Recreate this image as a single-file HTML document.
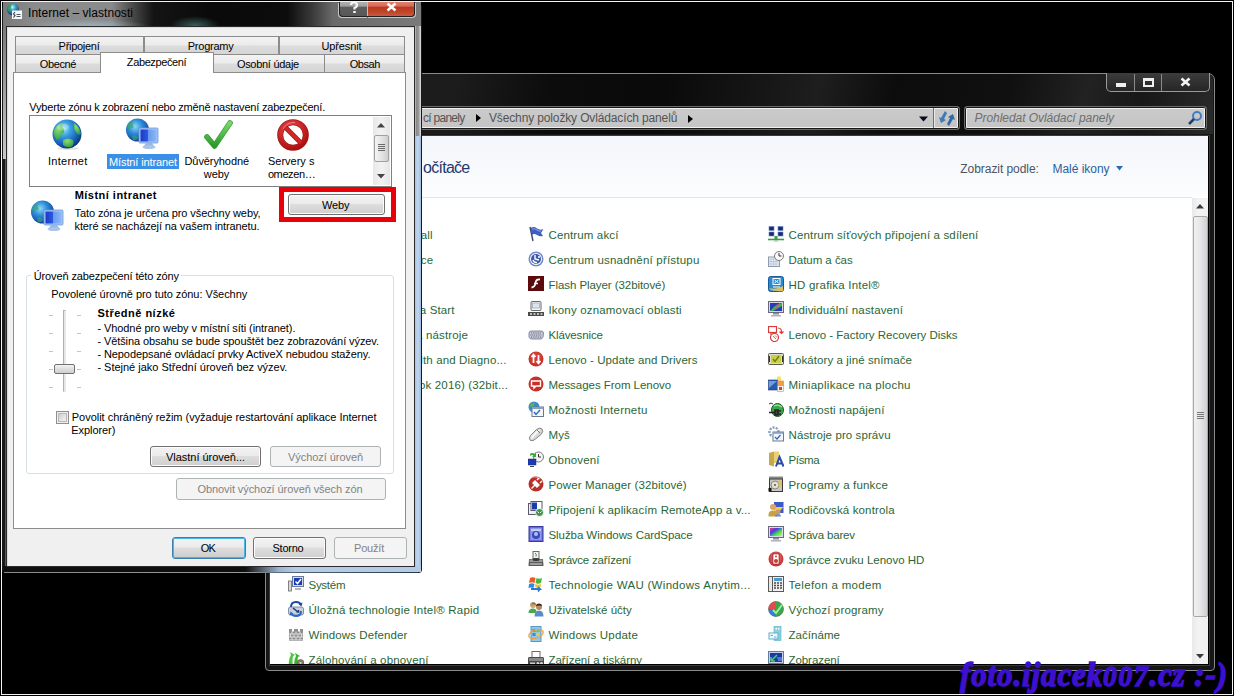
<!DOCTYPE html><html><head><meta charset="utf-8"><style>
html,body{margin:0;padding:0;}
body{width:1234px;height:696px;background:#000;position:relative;overflow:hidden;font-family:"Liberation Sans",sans-serif;}
.r{position:absolute;box-sizing:border-box;}
.t{position:absolute;white-space:nowrap;line-height:1;}
</style></head><body>
<div class="r" style="left:1px;top:1px;width:1232px;height:694px;border:1px solid #f4f4f4;"></div>
<div class="r" style="left:265px;top:73px;width:950px;height:598px;border:1px solid #8a8a8a;border-radius:7px 7px 4px 4px;background:#161616;"></div>
<div class="r" style="left:266px;top:74px;width:947px;height:60px;background:linear-gradient(100deg,#1a1a1a 0%,#1c1c1c 20%,#0c0c0c 30%,#0a0a0a 42%,#161616 52%,#1e1e1e 58%,#0c0c0c 66%,#101010 78%,#222 86%,#181818 92%,#2a2a2a 100%);border-radius:6px 6px 0 0;"></div>
<div class="r" style="left:270px;top:135px;width:938px;height:1px;background:#5a5a5a;"></div>
<div class="r" style="left:270px;top:665px;width:938px;height:1px;background:#707070;"></div>
<div class="r" style="left:269px;top:136px;width:1px;height:529px;background:#707070;"></div>
<div class="r" style="left:1209px;top:136px;width:1px;height:529px;background:#707070;"></div>
<div class="r" style="left:269px;top:135px;width:941px;height:531px;border:1px solid #3a3a3a;background:#000;"></div>
<div class="r" style="left:1106px;top:73px;width:104px;height:19px;border:1px solid #9a9a9a;border-top:none;border-radius:0 0 5px 5px;background:linear-gradient(#3c3c3c,#262626);"></div>
<div class="r" style="left:1134px;top:74px;width:1px;height:17px;background:#8a8a8a;"></div>
<div class="r" style="left:1161px;top:74px;width:1px;height:17px;background:#8a8a8a;"></div>
<div class="r" style="left:1116px;top:83px;width:10px;height:4px;background:#f0f0f0;"></div>
<div class="r" style="left:1143px;top:78px;width:11px;height:9px;border:2px solid #f0f0f0;border-top-width:3px;"></div>
<svg class="r" style="left:1180px;top:77px" width="11" height="10" viewBox="0 0 11 10"><path d="M1.5 1.5 L9.5 8.5 M9.5 1.5 L1.5 8.5" stroke="#f4f4f4" stroke-width="2.6"></path></svg>
<div class="r" style="left:400px;top:106px;width:560px;height:24px;border:1px solid #6a6a6a;border-radius:3px;box-shadow:inset 0 0 0 1px #181818,inset 0 0 0 2px #f0f0f0;background:linear-gradient(#cbcbcb,#c4c4c4);"></div>
<div class="r" style="left:933px;top:108px;width:1px;height:20px;background:#707070;"></div>
<div class="r" style="left:934px;top:108px;width:1px;height:20px;background:#e8e8e8;"></div>
<svg class="r" style="left:919px;top:116px" width="9" height="6" viewBox="0 0 9 6"><path d="M0 0.5 H9 L4.5 5.5 Z" fill="#0a0a20"></path></svg>
<span class="t" style="left: 423px; top: 112.24px; font-size: 12px; color: rgb(84, 84, 84); letter-spacing: -0.726px;">cí panely</span>
<svg class="r" style="left:476px;top:114px" width="5" height="8" viewBox="0 0 5 8"><path d="M0 0 L5 4 L0 8 Z" fill="#000"></path></svg>
<span class="t" style="left: 489px; top: 112.24px; font-size: 12px; color: rgb(84, 84, 84); letter-spacing: -0.139px;">Všechny položky Ovládacích panelů</span>
<svg class="r" style="left:688px;top:114.5px" width="5" height="8" viewBox="0 0 5 8"><path d="M0 0 L5 4 L0 8 Z" fill="#000"></path></svg>
<svg class="r" style="left:937px;top:110px" width="20" height="17" viewBox="0 0 20 17"><path d="M8 1 L4 8 L2 7 L4 13 L9 10 L7 9 L10 3 Z" fill="#3d7ab8"></path><path d="M12 16 L16 9 L18 10 L16 4 L11 7 L13 8 L10 14 Z" fill="#2f6aa6"></path></svg>
<div class="r" style="left:964px;top:106px;width:243px;height:24px;border:1px solid #6a6a6a;border-radius:3px;box-shadow:inset 0 0 0 1px #181818,inset 0 0 0 2px #f0f0f0;background:linear-gradient(#cbcbcb,#c4c4c4);"></div>
<span class="t" style="left: 974.5px; top: 112.24px; font-size: 12px; color: rgb(110, 110, 110); font-style: italic; letter-spacing: -0.051px;">Prohledat Ovládací panely</span>
<svg class="r" style="left:1187px;top:110px" width="16" height="16" viewBox="0 0 16 16"><circle cx="10" cy="6" r="4" fill="none" stroke="#3f7fbf" stroke-width="2"></circle><path d="M7 9 L2 14" stroke="#1f3f6f" stroke-width="2.5"></path></svg>
<div class="r" style="left:270px;top:136px;width:938px;height:528px;background:#fff;"></div>
<div class="r" style="left:270px;top:136px;width:938px;height:61px;background:linear-gradient(180deg,#f3f6fb 0%,#f7f9fc 50%,#fcfdfe 100%);"></div>
<div class="r" style="left:270px;top:197px;width:922px;height:1px;background:#dce6ec;"></div>
<span class="t" style="left: 423px; top: 159.86px; font-size: 16px; color: rgb(30, 58, 110); letter-spacing: -0.728px;">očítače</span>
<span class="t" style="left: 960.3px; top: 163.24px; font-size: 12px; color: rgb(74, 86, 99); letter-spacing: -0.053px;">Zobrazit podle:</span>
<span class="t" style="left: 1052.5px; top: 163.24px; font-size: 12px; color: rgb(44, 95, 158); letter-spacing: -0.036px;">Malé ikony</span>
<svg class="r" style="left:1116px;top:166px" width="7" height="5" viewBox="0 0 7 5"><path d="M0 0 H7 L3.5 4.5 Z" fill="#2c6aaf"></path></svg>
<div class="r" style="left:1192px;top:198px;width:16px;height:466px;background:linear-gradient(90deg,#e9e9e9,#f3f3f3 40%,#f0f0f0);"></div>
<svg class="r" style="left:1196px;top:204px" width="8" height="5" viewBox="0 0 8 5"><path d="M0 4.5 L4 0 L8 4.5 Z" fill="#3a3a3a"></path></svg>
<svg class="r" style="left:1196px;top:654px" width="8" height="5" viewBox="0 0 8 5"><path d="M0 0 H8 L4 4.5 Z" fill="#3a3a3a"></path></svg>
<div class="r" style="left:1193px;top:216px;width:15px;height:401px;border:1px solid #a8a8a8;border-radius:2px;background:linear-gradient(90deg,#f1f1f1,#e6e6e8 50%,#d0d0d4);"></div>
<div class="r" style="left:1197px;top:412px;width:7px;height:1px;background:#777;"></div>
<div class="r" style="left:1197px;top:414px;width:7px;height:1px;background:#777;"></div>
<div class="r" style="left:1197px;top:416px;width:7px;height:1px;background:#777;"></div>
<div class="r" style="left:1197px;top:418px;width:7px;height:1px;background:#777;"></div>
<div class="r" style="left:270px;top:198px;width:922px;height:466px;overflow:hidden;">
<span class="t" style="left: 278.5px; top: 31.77px; font-size: 11.5px; color: rgb(42, 102, 54); letter-spacing: 0.134px;">Centrum akcí</span>
<svg class="r" style="left:258px;top:28px" width="16" height="16" viewBox="0 0 16 16"><path d="M2 1 L5 15" stroke="#3a4a6a" stroke-width="1.4"></path><path d="M2.5 2 Q6 0 9 2.5 Q12 4.5 15.5 3 L13 7 L15 10 Q12 11 9 9 Q6 7 4 9 Z" fill="#3f5fc0"></path><path d="M4 3 Q7 2 9 4 Q11 5.5 13 5" stroke="#8aa4e8" stroke-width="1" fill="none"></path></svg>
<span class="t" style="left: 278.5px; top: 56.77px; font-size: 11.5px; color: rgb(42, 102, 54); letter-spacing: 0.201px;">Centrum usnadnění přístupu</span>
<svg class="r" style="left:258px;top:53px" width="16" height="16" viewBox="0 0 16 16"><circle cx="8" cy="8" r="7.5" fill="#7088c8"></circle><circle cx="8" cy="8" r="6" fill="#fff"></circle><circle cx="8" cy="8" r="5" fill="#3a58a8"></circle><path d="M7 4 V8 L11 9 M5 9 Q6 12 9 11.5" stroke="#fff" stroke-width="1.4" fill="none"></path><circle cx="11" cy="6" r="1" fill="#fff"></circle></svg>
<span class="t" style="left: 278.5px; top: 81.77px; font-size: 11.5px; color: rgb(42, 102, 54); letter-spacing: -0.067px;">Flash Player (32bitové)</span>
<svg class="r" style="left:258px;top:78px" width="16" height="16" viewBox="0 0 16 16"><rect x="0" y="0" width="16" height="15" fill="#5c0a0c"></rect><path d="M12 3.5 Q8 3 7.5 7 Q7 11 3.5 11.5" stroke="#fff" stroke-width="1.8" fill="none"></path><path d="M6 7.5 H10" stroke="#fff" stroke-width="1.5"></path></svg>
<span class="t" style="left: 278.5px; top: 106.77px; font-size: 11.5px; color: rgb(42, 102, 54); letter-spacing: 0.174px;">Ikony oznamovací oblasti</span>
<svg class="r" style="left:258px;top:103px" width="16" height="16" viewBox="0 0 16 16"><rect x="3" y="0.5" width="10" height="9" rx="1" fill="#f4f4f4" stroke="#6a6a6a"></rect><rect x="4.5" y="2" width="7" height="5" fill="#dde6ee" stroke="#8a9aaa" stroke-width=".6"></rect><rect x="0" y="11" width="16" height="4" fill="#4a4a4a"></rect><path d="M2 13 H4 M5.5 13 H7.5 M9 13 H11 M12.5 13 H14.5" stroke="#e0e0e0" stroke-width="1.4"></path></svg>
<span class="t" style="left: 278.5px; top: 131.77px; font-size: 11.5px; color: rgb(42, 102, 54); letter-spacing: -0.133px;">Klávesnice</span>
<svg class="r" style="left:258px;top:128px" width="16" height="16" viewBox="0 0 16 16"><path d="M1 7 Q1 5 3.5 5 H13 Q15.5 5 15.5 7 L15 11 Q14.5 13 12 13 H4 Q1.5 13 1 11 Z" fill="#c8cad8" stroke="#6a6e88" stroke-width=".8"></path><path d="M3 7 H13 M2.5 9 H13.5 M3 11 H13" stroke="#5a5e78" stroke-width=".9" stroke-dasharray="1 .8"></path></svg>
<span class="t" style="left: 278.5px; top: 156.77px; font-size: 11.5px; color: rgb(42, 102, 54); letter-spacing: 0.077px;">Lenovo - Update and Drivers</span>
<svg class="r" style="left:258px;top:153px" width="16" height="16" viewBox="0 0 16 16"><circle cx="8" cy="8" r="7.5" fill="#c8302a"></circle><circle cx="8" cy="7" r="6" fill="#d84a40" opacity=".6"></circle><path d="M5.5 12 V4 M3.5 6 L5.5 3.5 L7.5 6 M10.5 4 V12 M8.5 10 L10.5 12.5 L12.5 10" stroke="#fff" stroke-width="1.7" fill="none"></path></svg>
<span class="t" style="left: 278.5px; top: 181.77px; font-size: 11.5px; color: rgb(42, 102, 54); letter-spacing: -0.039px;">Messages From Lenovo</span>
<svg class="r" style="left:258px;top:178px" width="16" height="16" viewBox="0 0 16 16"><circle cx="8" cy="8" r="7.5" fill="#c8302a"></circle><path d="M3.5 5 H12.5 V10 H8 L6 12 V10 H3.5 Z" fill="none" stroke="#fff" stroke-width="1.4"></path></svg>
<span class="t" style="left: 278.5px; top: 206.77px; font-size: 11.5px; color: rgb(42, 102, 54); letter-spacing: 0.249px;">Možnosti Internetu</span>
<svg class="r" style="left:258px;top:203px" width="16" height="16" viewBox="0 0 16 16"><circle cx="6" cy="6" r="5.5" fill="#3a8ac8"></circle><path d="M2 4 Q4 1 7 2 Q5 4 6 6 Q3 7 2 5Z" fill="#5ab84a"></path><rect x="4" y="6" width="11.5" height="9.5" fill="#f4f6fa" stroke="#6a7a8a"></rect><rect x="4" y="6" width="11.5" height="2" fill="#8aa0c0"></rect><path d="M6 11 L8 13.5 L12 9" stroke="#2a6ac8" stroke-width="1.4" fill="none"></path></svg>
<span class="t" style="left: 278.5px; top: 231.77px; font-size: 11.5px; color: rgb(42, 102, 54); letter-spacing: 0.135px;">Myš</span>
<svg class="r" style="left:258px;top:228px" width="16" height="16" viewBox="0 0 16 16"><path d="M2.5 14.5 Q0 12.5 2.5 9.5 L8.5 3.5 Q11.5 1 14 3 Q16 5.5 13 8.5 L7.5 13 Q5 15.5 2.5 14.5 Z" fill="#d8d8d8" stroke="#6a6a6a" stroke-width=".8"></path><path d="M3 13 Q2 11 4 9.5 L9 4.5 Q11 3 12 4 L5 12 Z" fill="#f6f6f6"></path><path d="M9 4 L12 7" stroke="#5a5a5a" stroke-width=".8"></path></svg>
<span class="t" style="left: 278.5px; top: 256.77px; font-size: 11.5px; color: rgb(42, 102, 54); letter-spacing: 0.166px;">Obnovení</span>
<svg class="r" style="left:258px;top:253px" width="16" height="16" viewBox="0 0 16 16"><circle cx="10.5" cy="6" r="5" fill="#f4f4f4" stroke="#7a7a7a"></circle><path d="M10.5 3 V6 H13" stroke="#333" stroke-width="1" fill="none"></path><path d="M2 3 Q4 1 7 3 L8 1 L8 6 L4 6 L5.5 4.5 Q4 3.5 2 5Z" fill="#3aa83a"></path><rect x="0" y="8" width="8" height="6" fill="#1a3ab8" stroke="#2a2a6a" stroke-width=".5"></rect><path d="M2 15.5 H6" stroke="#444" stroke-width="1"></path></svg>
<span class="t" style="left: 278.5px; top: 281.77px; font-size: 11.5px; color: rgb(42, 102, 54); letter-spacing: 0.112px;">Power Manager (32bitové)</span>
<svg class="r" style="left:258px;top:278px" width="16" height="16" viewBox="0 0 16 16"><circle cx="8" cy="8" r="7.5" fill="#b8302a"></circle><path d="M4 1.5 Q8 0 12 3" stroke="#e88880" stroke-width="1.2" fill="none"></path><path d="M3.5 12.5 L6.5 9.5 M7 5 L11 9 L9 11 L5 7 Z M9 4 L11 2 M12 7 L14 5" stroke="#fff" stroke-width="1.4" fill="#fff"></path></svg>
<span class="t" style="left: 278.5px; top: 306.77px; font-size: 11.5px; color: rgb(42, 102, 54); letter-spacing: 0.129px;">Připojení k aplikacím RemoteApp a v...</span>
<svg class="r" style="left:258px;top:303px" width="16" height="16" viewBox="0 0 16 16"><rect x="0.5" y="2.5" width="8" height="11" fill="#f0f0f0" stroke="#5a5a6a"></rect><rect x="3" y="0.5" width="11" height="9" fill="#fff" stroke="#5a5a6a"></rect><rect x="4" y="1.5" width="5" height="7" fill="#1a3ab0"></rect><circle cx="11.5" cy="11.5" r="4" fill="#3a9a4a" stroke="#fff" stroke-width=".8"></circle><path d="M9.5 10.5 L11 12 M13.5 10.5 L12 12" stroke="#fff" stroke-width="1"></path></svg>
<span class="t" style="left: 278.5px; top: 331.77px; font-size: 11.5px; color: rgb(42, 102, 54); letter-spacing: -0.069px;">Služba Windows CardSpace</span>
<svg class="r" style="left:258px;top:328px" width="16" height="16" viewBox="0 0 16 16"><rect x="1" y="0.5" width="14" height="15" fill="#6a6ad8" stroke="#3a3a9a"></rect><rect x="2.5" y="2" width="11" height="12" fill="#8a9af0"></rect><circle cx="8" cy="9" r="4" fill="#3a4ab8"></circle><path d="M3 4 H13" stroke="#fff" stroke-width="1"></path><circle cx="8" cy="8" r="2" fill="#b0c0ff"></circle></svg>
<span class="t" style="left: 278.5px; top: 356.77px; font-size: 11.5px; color: rgb(42, 102, 54); letter-spacing: -0.237px;">Správce zařízení</span>
<svg class="r" style="left:258px;top:353px" width="16" height="16" viewBox="0 0 16 16"><rect x="5" y="0.5" width="6" height="7" fill="#f4f4f4" stroke="#6a6a6a"></rect><path d="M7 2 Q9 3 8 5.5" stroke="#3a8a3a" stroke-width="1" fill="none"></path><path d="M1 8 H15 L15.5 15 H0.5 Z" fill="#5a5a5a"></path><rect x="1.5" y="8.5" width="13" height="2.5" fill="#9a9a9a"></rect><path d="M2 13 H14" stroke="#e0e0e0" stroke-width="1"></path><ellipse cx="8" cy="8.5" rx="3.5" ry="1.5" fill="#3a3a3a"></ellipse></svg>
<span class="t" style="left: 278.5px; top: 381.77px; font-size: 11.5px; color: rgb(42, 102, 54); letter-spacing: 0.301px;">Technologie WAU (Windows Anytim...</span>
<svg class="r" style="left:258px;top:378px" width="16" height="16" viewBox="0 0 16 16"><path d="M2 2 Q4.5 0.5 7.5 2 L6.5 7 Q4 5.5 1 7 Z" fill="#f05a20"></path><path d="M8.5 2 Q11.5 3.5 14 2 L13 7 Q10 8.5 7.5 7 Z" fill="#4ab83a"></path><path d="M1 8 Q4 6.5 6.5 8 L5.5 12 Q3 11 0.5 12 Z" fill="#2a8ae8"></path><path d="M7.5 8 Q10 9.5 13 8 L12.5 11 Q10 12 7 11Z" fill="#f8c020"></path><path d="M3 13 H12 L10 11 M12 13 L10 15.5" stroke="#2a7ad8" stroke-width="1.8" fill="none"></path></svg>
<span class="t" style="left: 278.5px; top: 406.77px; font-size: 11.5px; color: rgb(42, 102, 54); letter-spacing: 0.013px;">Uživatelské účty</span>
<svg class="r" style="left:258px;top:403px" width="16" height="16" viewBox="0 0 16 16"><circle cx="5" cy="4" r="3" fill="#c8a878"></circle><path d="M5 1.5 Q8 1 8 4 Q6 2.5 3 4Z" fill="#8a6a3a"></path><path d="M0.5 12 Q0.5 7.5 5 7.5 Q8 7.5 8.5 10 V12 Z" fill="#4aa84a"></path><circle cx="11" cy="6" r="3" fill="#b88858"></circle><path d="M8 5 Q8 2.5 11 2.5 Q14 2.5 14 5 Q11 4 8 5Z" fill="#3a2a1a"></path><path d="M6.5 15.5 Q6.5 9.5 11 9.5 Q15.5 9.5 15.5 15.5 Z" fill="#5a8ac8"></path></svg>
<span class="t" style="left: 278.5px; top: 431.77px; font-size: 11.5px; color: rgb(42, 102, 54); letter-spacing: 0.183px;">Windows Update</span>
<svg class="r" style="left:258px;top:428px" width="16" height="16" viewBox="0 0 16 16"><rect x="3" y="0.5" width="10" height="15" fill="#8ac8f0" stroke="#5a9ac8"></rect><rect x="4.5" y="3" width="3" height="3" fill="#f06a30"></rect><rect x="8.5" y="3" width="3" height="3" fill="#6ac84a"></rect><rect x="4.5" y="7" width="3" height="3" fill="#3a8ad8"></rect><rect x="8.5" y="7" width="3" height="3" fill="#f8c830"></rect><ellipse cx="8" cy="8" rx="7.5" ry="4" transform="rotate(-20 8 8)" fill="none" stroke="#f0a040" stroke-width="1.3"></ellipse></svg>
<span class="t" style="left: 278.5px; top: 456.77px; font-size: 11.5px; color: rgb(42, 102, 54); letter-spacing: -0.058px;">Zařízení a tiskárny</span>
<svg class="r" style="left:258px;top:453px" width="16" height="16" viewBox="0 0 16 16"><rect x="4" y="0.5" width="8" height="6" fill="#fff" stroke="#6a6a6a"></rect><path d="M1 6 H15 Q16 6 16 8 V14 H0 V8 Q0 6 1 6Z" fill="#4a4a4a"></path><rect x="1" y="7" width="14" height="3" fill="#8a8a8a"></rect><circle cx="10" cy="12.5" r="1.5" fill="#ddd"></circle><circle cx="13.5" cy="12.5" r="1.5" fill="#ddd"></circle><rect x="2" y="11.5" width="5" height="2" fill="#ccc"></rect></svg>
<span class="t" style="left: 518.5px; top: 31.77px; font-size: 11.5px; color: rgb(42, 102, 54); letter-spacing: 0.148px;">Centrum síťových připojení a sdílení</span>
<svg class="r" style="left:498px;top:28px" width="16" height="16" viewBox="0 0 16 16"><rect x="1" y="0.5" width="5" height="4" fill="#1a2a6a" stroke="#6a8ac8" stroke-width=".6"></rect><rect x="10" y="0.5" width="5" height="4" fill="#1a2a6a" stroke="#6a8ac8" stroke-width=".6"></rect><rect x="1" y="6" width="5" height="4" fill="#1a2a6a" stroke="#6a8ac8" stroke-width=".6"></rect><rect x="10" y="6" width="5" height="4" fill="#1a2a6a" stroke="#6a8ac8" stroke-width=".6"></rect><path d="M0 13.5 H16" stroke="#3a9a4a" stroke-width="1.6"></path><path d="M8 10 V13" stroke="#3a9a4a" stroke-width="3"></path><path d="M6 15 H10" stroke="#8ac88a" stroke-width="1"></path></svg>
<span class="t" style="left: 518.5px; top: 56.77px; font-size: 11.5px; color: rgb(42, 102, 54); letter-spacing: -0.033px;">Datum a čas</span>
<svg class="r" style="left:498px;top:53px" width="16" height="16" viewBox="0 0 16 16"><rect x="0.5" y="6" width="11" height="9.5" fill="#e8eef6" stroke="#8a9aaa"></rect><path d="M0.5 8 H11.5 M3 8 V15 M5.5 8 V15 M8 8 V15 M0.5 10.5 H11.5 M0.5 13 H11.5" stroke="#a8b8c8" stroke-width=".6"></path><circle cx="11" cy="5" r="4.5" fill="#fafafa" stroke="#7a7a7a"></circle><path d="M11 2 V5 H13.5" stroke="#333" stroke-width="1" fill="none"></path></svg>
<span class="t" style="left: 518.5px; top: 81.77px; font-size: 11.5px; color: rgb(42, 102, 54); letter-spacing: 0.21px;">HD grafika Intel®</span>
<svg class="r" style="left:498px;top:78px" width="16" height="16" viewBox="0 0 16 16"><rect x="0.5" y="0.5" width="15" height="15" rx="2" fill="#2a8ad0" stroke="#1a5a9a"></rect><path d="M1 12 Q4 16 15 15 L15 10 Q8 14 1 12Z" fill="#d8c060"></path><rect x="5" y="2.5" width="7" height="6" fill="none" stroke="#fff" stroke-width="1"></rect><path d="M6.5 4 L10.5 7 M10.5 4 L6.5 7 M5 11 H12" stroke="#fff" stroke-width="1"></path></svg>
<span class="t" style="left: 518.5px; top: 106.77px; font-size: 11.5px; color: rgb(42, 102, 54); letter-spacing: 0.148px;">Individuální nastavení</span>
<svg class="r" style="left:498px;top:103px" width="16" height="16" viewBox="0 0 16 16"><rect x="0.5" y="0.5" width="15" height="11" fill="#d8d8e0" stroke="#6a6a7a"></rect><rect x="2" y="2" width="12" height="8" fill="#2a3ab8"></rect><path d="M2 10 L7 5 Q10 3 14 2 V5 L5 10Z" fill="#3ab84a"></path><path d="M12 2.5 L7 8" stroke="#e84a8a" stroke-width="1.2"></path><rect x="5" y="12" width="6" height="1.5" fill="#8a8a9a"></rect><rect x="3" y="14" width="10" height="1.5" fill="#b0b0b8"></rect></svg>
<span class="t" style="left: 518.5px; top: 131.77px; font-size: 11.5px; color: rgb(42, 102, 54); letter-spacing: -0.012px;">Lenovo - Factory Recovery Disks</span>
<svg class="r" style="left:498px;top:128px" width="16" height="16" viewBox="0 0 16 16"><rect x="0.5" y="0.5" width="8" height="6" fill="#fff" stroke="#d83a3a" stroke-width="1.2"></rect><path d="M2 8 H7" stroke="#d83a3a" stroke-width="1.2"></path><circle cx="6.5" cy="11.5" r="4" fill="#fff" stroke="#d83a3a" stroke-width="1.2"></circle><path d="M5 10 L8 13 M7 9.5 L9 11.5" stroke="#d83a3a" stroke-width=".8"></path><path d="M10 2 Q14 2 13.5 7 M11.5 5.5 L13.5 7.5 L15.5 5.5" stroke="#d83a3a" stroke-width="1.2" fill="none"></path></svg>
<span class="t" style="left: 518.5px; top: 156.77px; font-size: 11.5px; color: rgb(42, 102, 54); letter-spacing: 0.089px;">Lokátory a jiné snímače</span>
<svg class="r" style="left:498px;top:153px" width="16" height="16" viewBox="0 0 16 16"><rect x="0.5" y="2.5" width="15" height="11" rx="1" fill="#dcdcc8" stroke="#5a5a50"></rect><rect x="3" y="4" width="10" height="8" fill="#c8d040"></rect><path d="M5 8 L7 10.5 L11 5" stroke="#6a7a2a" stroke-width="1.3" fill="none"></path><path d="M1.5 5 V11 M14.5 5 V11" stroke="#333" stroke-width="1"></path></svg>
<span class="t" style="left: 518.5px; top: 181.77px; font-size: 11.5px; color: rgb(42, 102, 54); letter-spacing: 0.27px;">Miniaplikace na plochu</span>
<svg class="r" style="left:498px;top:178px" width="16" height="16" viewBox="0 0 16 16"><rect x="9" y="0.5" width="4" height="4" fill="#f8e060"></rect><rect x="0.5" y="4" width="9" height="10" fill="#2a5ab0" stroke="#1a3a7a" stroke-width=".6"></rect><path d="M1 5 L9 5 L1 12Z" fill="#6aa0e0"></path><rect x="9.5" y="5" width="6" height="4.5" fill="#f0a040" stroke="#c87a20" stroke-width=".5"></rect><rect x="9.5" y="9.5" width="6" height="6" fill="#f4f4f4" stroke="#888" stroke-width=".5"></rect><rect x="11" y="11" width="3" height="3" fill="#c84a2a"></rect></svg>
<span class="t" style="left: 518.5px; top: 206.77px; font-size: 11.5px; color: rgb(42, 102, 54); letter-spacing: 0.156px;">Možnosti napájení</span>
<svg class="r" style="left:498px;top:203px" width="16" height="16" viewBox="0 0 16 16"><path d="M5 3 Q3 1 1 3" stroke="#333" stroke-width="1" fill="none"></path><ellipse cx="9.5" cy="9" rx="6" ry="6.5" fill="#3aa84a" stroke="#1a5a2a"></ellipse><path d="M6 5 Q10 3 14 6" stroke="#a8e0a8" stroke-width="1.2" fill="none"></path><path d="M1 11.5 H7 M7 9 H10 V14 H7 Z M10 10 H13 M10 13 H13" stroke="#222" stroke-width="1.6" fill="#444"></path></svg>
<span class="t" style="left: 518.5px; top: 231.77px; font-size: 11.5px; color: rgb(42, 102, 54); letter-spacing: 0.097px;">Nástroje pro správu</span>
<svg class="r" style="left:498px;top:228px" width="16" height="16" viewBox="0 0 16 16"><circle cx="6" cy="6" r="4.5" fill="none" stroke="#8aa0c0" stroke-width="2.5" stroke-dasharray="2 1.2"></circle><rect x="5" y="6" width="10.5" height="9" fill="#f4f6fa" stroke="#6a7a8a"></rect><rect x="5" y="6" width="10.5" height="1.8" fill="#8aa0c0"></rect><path d="M7 11 L9 13 L12.5 9" stroke="#2a6ac8" stroke-width="1.3" fill="none"></path></svg>
<span class="t" style="left: 518.5px; top: 256.77px; font-size: 11.5px; color: rgb(42, 102, 54); letter-spacing: -0.359px;">Písma</span>
<svg class="r" style="left:498px;top:253px" width="16" height="16" viewBox="0 0 16 16"><path d="M1 2 L6 0.5 V15.5 L1 14 Z" fill="#c8a848"></path><path d="M6 0.5 H11 V12 H6Z" fill="#e8d078"></path><path d="M8 15.5 L11.5 6 L15.5 15.5 M9.5 12.5 H14" stroke="#2a4aa8" stroke-width="2" fill="none"></path></svg>
<span class="t" style="left: 518.5px; top: 281.77px; font-size: 11.5px; color: rgb(42, 102, 54); letter-spacing: 0.176px;">Programy a funkce</span>
<svg class="r" style="left:498px;top:278px" width="16" height="16" viewBox="0 0 16 16"><rect x="1" y="0.5" width="14" height="3" fill="#8a8a8a"></rect><rect x="1.5" y="3" width="13" height="12.5" fill="#c8c8c0" stroke="#3a3a3a"></rect><rect x="0.5" y="12" width="3" height="3.5" fill="#111"></rect><circle cx="7" cy="9" r="4" fill="#e0e0d8" stroke="#8a8a7a"></circle><circle cx="7" cy="9" r="1" fill="#5a5a5a"></circle><rect x="10.5" y="4.5" width="3.5" height="6" fill="#e0c060"></rect></svg>
<span class="t" style="left: 518.5px; top: 306.77px; font-size: 11.5px; color: rgb(42, 102, 54); letter-spacing: 0.139px;">Rodičovská kontrola</span>
<svg class="r" style="left:498px;top:303px" width="16" height="16" viewBox="0 0 16 16"><rect x="6" y="1" width="9.5" height="11" fill="#3a5ac8"></rect><path d="M6 6 H15.5 L10 12 H6Z" fill="#f8c840"></path><circle cx="5" cy="6" r="3" fill="#d8a868"></circle><path d="M0.5 14 Q0.5 9.5 5 9.5 Q8 9.5 9 12 L9 15.5 H0.5Z" fill="#c8a040"></path><circle cx="10" cy="11" r="2.5" fill="#c89868"></circle><path d="M7 15.5 Q7 13 10 13 Q13 13 13 15.5Z" fill="#6a8ac8"></path></svg>
<span class="t" style="left: 518.5px; top: 331.77px; font-size: 11.5px; color: rgb(42, 102, 54); letter-spacing: -0.167px;">Správa barev</span>
<svg class="r" style="left:498px;top:328px" width="16" height="16" viewBox="0 0 16 16"><rect x="0.5" y="0.5" width="15" height="11" fill="#d8dce8" stroke="#6a6a7a"></rect><defs><linearGradient id="cg" x1="0" y1="0" x2="1" y2="1"><stop offset="0" stop-color="#e83a8a"></stop><stop offset=".35" stop-color="#4a3ae8"></stop><stop offset=".65" stop-color="#3ae84a"></stop><stop offset="1" stop-color="#f8e83a"></stop></linearGradient></defs><rect x="2" y="2" width="12" height="8" fill="url(#cg)"></rect><rect x="5" y="12" width="6" height="1.5" fill="#8a8a9a"></rect><rect x="3" y="14" width="10" height="1.5" fill="#b0b0b8"></rect></svg>
<span class="t" style="left: 518.5px; top: 356.77px; font-size: 11.5px; color: rgb(42, 102, 54); letter-spacing: -0.015px;">Správce zvuku Lenovo HD</span>
<svg class="r" style="left:498px;top:353px" width="16" height="16" viewBox="0 0 16 16"><circle cx="8" cy="8" r="7.5" fill="#c83a3a"></circle><circle cx="8" cy="7" r="6" fill="#e86a6a" opacity=".5"></circle><rect x="5" y="3" width="6" height="10" fill="#fff" stroke="#8a1a1a" stroke-width=".6"></rect><circle cx="8" cy="10" r="2" fill="#c83a3a"></circle><circle cx="8" cy="5.5" r="1" fill="#c83a3a"></circle></svg>
<span class="t" style="left: 518.5px; top: 381.77px; font-size: 11.5px; color: rgb(42, 102, 54); letter-spacing: 0.332px;">Telefon a modem</span>
<svg class="r" style="left:498px;top:378px" width="16" height="16" viewBox="0 0 16 16"><rect x="0.5" y="0.5" width="4" height="15" fill="#e8e8e8" stroke="#5a5a5a"></rect><rect x="4.5" y="0.5" width="11" height="15" fill="#f0f0f0" stroke="#5a5a5a"></rect><rect x="6" y="2" width="8" height="3" fill="#4a9ac8"></rect><path d="M6 7 H8 M9 7 H11 M12 7 H14 M6 9.5 H8 M9 9.5 H11 M12 9.5 H14 M6 12 H8 M9 12 H11 M12 12 H14" stroke="#4a4a4a" stroke-width="1.4"></path></svg>
<span class="t" style="left: 518.5px; top: 406.77px; font-size: 11.5px; color: rgb(42, 102, 54); letter-spacing: 0.157px;">Výchozí programy</span>
<svg class="r" style="left:498px;top:403px" width="16" height="16" viewBox="0 0 16 16"><circle cx="8" cy="8" r="7.5" fill="#3aa84a" stroke="#5a5a5a" stroke-width=".6"></circle><path d="M8 8 L8 0.5 A7.5 7.5 0 0 0 0.5 8Z" fill="#e84a4a"></path><path d="M8 8 L0.5 8 A7.5 7.5 0 0 0 8 15.5Z" fill="#3a7ad8"></path><path d="M5 9 L8 12 L14 4" stroke="#9af09a" stroke-width="2" fill="none"></path></svg>
<span class="t" style="left: 518.5px; top: 431.77px; font-size: 11.5px; color: rgb(42, 102, 54); letter-spacing: 0.045px;">Začínáme</span>
<svg class="r" style="left:498px;top:428px" width="16" height="16" viewBox="0 0 16 16"><rect x="6" y="0.5" width="7" height="14" fill="#8ad0e0" stroke="#5ab0c8" stroke-width=".6"></rect><rect x="7.5" y="2" width="1.5" height="1.5" fill="#fff"></rect><rect x="10" y="2" width="1.5" height="1.5" fill="#fff"></rect><rect x="1" y="7" width="9" height="6" fill="#f0fafc" stroke="#5ab0c8"></rect><path d="M2.5 9.5 H5 M6 11 H8.5" stroke="#5ab0c8" stroke-width="1.2"></path></svg>
<span class="t" style="left: 518.5px; top: 456.77px; font-size: 11.5px; color: rgb(42, 102, 54); letter-spacing: -0.065px;">Zobrazení</span>
<svg class="r" style="left:498px;top:453px" width="16" height="16" viewBox="0 0 16 16"><rect x="0.5" y="0.5" width="15" height="12" fill="#c8d0e8" stroke="#6a7a9a"></rect><rect x="2" y="2" width="12" height="9" fill="#1a3aa8"></rect><path d="M3 10 L9 4 M3 10 V6 M3 10 H7" stroke="#4ac87a" stroke-width="1.6" fill="none"></path><path d="M9 7 H14 M10 9 H14" stroke="#8ab0f0" stroke-width="1"></path></svg>
<span class="t" style="left: 38.5px; top: 381.77px; font-size: 11.5px; color: rgb(42, 102, 54); letter-spacing: -0.274px;">Systém</span>
<svg class="r" style="left:18px;top:378px" width="16" height="16" viewBox="0 0 16 16"><rect x="0.5" y="5" width="3" height="10" fill="#d8d8d8" stroke="#6a6a6a" stroke-width=".8"></rect><rect x="4.5" y="0.5" width="11" height="10" fill="#d8dce8" stroke="#6a7a9a"></rect><rect x="6" y="2" width="8" height="7" fill="#1a3ab8"></rect><path d="M7.5 5.5 L9.5 7.5 L13 3" stroke="#fff" stroke-width="1.5" fill="none"></path><path d="M7 13 H13" stroke="#9a9aa8" stroke-width="1.5"></path></svg>
<span class="t" style="left: 38.5px; top: 406.77px; font-size: 11.5px; color: rgb(42, 102, 54); letter-spacing: 0.207px;">Úložná technologie Intel® Rapid</span>
<svg class="r" style="left:18px;top:403px" width="16" height="16" viewBox="0 0 16 16"><rect x="0.5" y="6" width="15" height="8" rx="2" fill="#c8d0dc" stroke="#6a7a90" stroke-width=".8"></rect><path d="M3 6 Q3 1 8 1 Q12 1 13 4" stroke="#1a4a9a" stroke-width="2" fill="none"></path><path d="M10.5 3 L13.5 5.5 L14.5 1.5Z" fill="#1a4a9a"></path><path d="M13 10 Q13 15 8 15 Q4 15 3 12" stroke="#2a6ac0" stroke-width="2" fill="none"></path><path d="M5.5 13 L2.5 10.5 L1.5 14.5Z" fill="#2a6ac0"></path><path d="M5 7 L10 11 M8.5 11 H10.5 V9" stroke="#1a3a7a" stroke-width="1.5" fill="none"></path></svg>
<span class="t" style="left: 38.5px; top: 431.77px; font-size: 11.5px; color: rgb(42, 102, 54); letter-spacing: 0.115px;">Windows Defender</span>
<svg class="r" style="left:18px;top:428px" width="16" height="16" viewBox="0 0 16 16"><path d="M1 3 H4 V5.5 H6 V3 H10 V5.5 H12 V3 H15 V15 H1Z" fill="#8e8e8e"></path><path d="M1 8 H15 M1 11 H15 M1 14 H15 M4 5.5 V8 M8 5.5 V8 M12 5.5 V8 M2.5 8 V11 M6 8 V11 M10 8 V11 M13.5 8 V11 M4 11 V14 M8 11 V14 M12 11 V14" stroke="#e8e8e8" stroke-width=".9"></path></svg>
<span class="t" style="left: 38.5px; top: 456.77px; font-size: 11.5px; color: rgb(42, 102, 54); letter-spacing: 0.147px;">Zálohování a obnovení</span>
<svg class="r" style="left:18px;top:453px" width="16" height="16" viewBox="0 0 16 16"><path d="M1 15 Q0 8 3 4 L2 1 L7 4 L5 5 Q4 9 5 15Z" fill="#4ac83a"></path><path d="M6 15 Q6 8 8 5 L7 2 L12 5 L10 6 Q9 10 10 15Z" fill="#3ab82a"></path><circle cx="12.5" cy="12" r="3.5" fill="#8a7a6a" stroke="#5a5a5a" stroke-width=".6"></circle><circle cx="12.5" cy="12" r="1" fill="#ddd"></circle></svg>
<span class="t" style="right:759.3px;top:31.77px;font-size:11.5px;color:#2a6636;letter-spacing:0.15px;">Brána Windows Firewall</span>
<span class="t" style="right:758.8px;top:56.77px;font-size:11.5px;color:#2a6636;letter-spacing:0.15px;">Centrum synchronizace</span>
<span class="t" style="right:737.3px;top:106.77px;font-size:11.5px;color:#2a6636;letter-spacing:0.15px;">Hlavní panel a nabídka Start</span>
<span class="t" style="right:723.9px;top:131.77px;font-size:11.5px;color:#2a6636;letter-spacing:0.15px;">Výkonnostní informace a nástroje</span>
<span class="t" style="right:685.5px;top:156.77px;font-size:11.5px;color:#2a6636;letter-spacing:0.15px;">Lenovo - System Health and Diagno...</span>
<span class="t" style="right:684.0px;top:181.77px;font-size:11.5px;color:#2a6636;letter-spacing:0.15px;">Mail (Microsoft Outlook 2016) (32bit...</span>
</div>
<div class="r" style="left:2px;top:2px;width:420px;height:571px;border:1px solid #1a1a1a;border-radius:6px 6px 3px 3px;background:linear-gradient(90deg,#0e0e0e 0%,#121212 60%,#b5cbe4 62%,#b8cfe8 100%);"></div>
<div class="r" style="left:3px;top:2px;width:418px;height:24px;background:linear-gradient(90deg,#7a7a7a 0%,#8c8c8c 8%,#8a8a8a 26%,#4a4a4a 31%,#141414 36%,#0a0a0a 50%,#0c0c0c 68%,#3a3a3a 74%,#6a6a6a 79%,#7a7a7a 100%);"></div>
<div class="r" style="left:30px;top:19px;width:120px;height:7px;background:radial-gradient(ellipse at 50% 100%,rgba(170,210,230,.55),rgba(120,150,170,0) 70%);"></div>
<div class="r" style="left:170px;top:16px;width:50px;height:10px;background:radial-gradient(ellipse at 50% 100%,rgba(90,150,150,.6),rgba(60,100,100,0) 70%);"></div>
<div class="r" style="left:415px;top:26px;width:6px;height:110px;background:linear-gradient(90deg,#c8c8c8,#8a8a8a 25%,#9a9a9a 60%,#e0e0e0);"></div>
<div class="r" style="left:415px;top:136px;width:6px;height:436px;background:linear-gradient(90deg,#a9c3e0,#c0d6ee 50%,#9fbadb);"></div>
<div class="r" style="left:3px;top:26px;width:3px;height:133px;background:linear-gradient(#7a7a7a,#c8c8c8);"></div>
<div class="r" style="left:3px;top:159px;width:3px;height:408px;background:#15191c;"></div>
<div class="r" style="left:5px;top:159px;width:1px;height:407px;background:#5a5a5a;"></div>
<div class="r" style="left:3px;top:566px;width:418px;height:6px;background:linear-gradient(90deg,#0e0e0e 0%,#0e0e0e 58%,#9ab4d0 66%,#b4cbe6 70%,#b4cbe6 100%);"></div>
<div class="r" style="left:4px;top:572px;width:414px;height:1px;background:linear-gradient(90deg,#8a8a8a,#9a9a9a 60%,#5a6a7a 66%,#2a3a4a);"></div>
<div class="r" style="left:6px;top:566px;width:409px;height:1px;background:#6a6a6a;"></div>
<svg class="r" style="left:6px;top:2px" width="18" height="18" viewBox="0 0 18 18"><defs><radialGradient id="tg" cx="45%" cy="30%" r="70%"><stop offset="0" stop-color="#b0fff0"></stop><stop offset=".4" stop-color="#3a9ac8"></stop><stop offset="1" stop-color="#0e3a6a"></stop></radialGradient></defs><circle cx="7" cy="7.5" r="6" fill="url(#tg)"></circle><path d="M2 5 Q3 2 6 2 Q4 5 5 8 Q3 9 2 8Z" fill="#3aa04a" opacity=".8"></path><rect x="6" y="8.5" width="10" height="8.5" fill="#f8f8f8"></rect><path d="M9 10 L7.5 12 L9 13.5 L7.5 15.5" stroke="#3a4a5a" stroke-width="1.2" fill="none"></path><path d="M10.5 12.5 H14.5 M10.5 14.5 H14.5" stroke="#4a5a6a" stroke-width="1"></path></svg>
<span class="t" style="left: 28px; top: 7.04px; font-size: 12px; color: rgb(0, 0, 0); letter-spacing: 0.045px;">Internet – vlastnosti</span>
<div class="r" style="left:339px;top:2px;width:29px;height:15px;border:1px solid #202020;border-top:none;border-right:none;border-radius:0 0 0 4px;background:linear-gradient(#b0b0b0 0%,#a0a0a0 30%,#5e5e5e 36%,#585858 100%);box-shadow:-1px 1px 0 #c8c8c8;"></div>
<div class="r" style="left:367px;top:2px;width:48px;height:15px;border:1px solid #202020;border-top:none;border-radius:0 0 4px 0;background:linear-gradient(#e08070 0%,#d86a58 30%,#b83a22 36%,#c04428 70%,#c85a40 100%);box-shadow:1px 1px 0 #c8c8c8;"></div>
<div class="r" style="left:367px;top:2px;width:1px;height:14px;background:#e8b0a0;"></div>
<svg class="r" style="left:349px;top:2px" width="10" height="11" viewBox="0 0 10 11"><path d="M2 3 Q2 0.5 5 0.5 Q8 0.5 8 3 Q8 5 5.5 6 V7.5" fill="none" stroke="#f4f4f4" stroke-width="2.2"></path><rect x="4.2" y="9" width="2.6" height="2.2" fill="#f4f4f4"></rect></svg>
<svg class="r" style="left:386px;top:2px" width="11" height="10" viewBox="0 0 11 10"><path d="M1.5 1.5 L9.5 8.5 M9.5 1.5 L1.5 8.5" stroke="#f8f8f8" stroke-width="2.6"></path></svg>
<div class="r" style="left:6px;top:26px;width:409px;height:541px;border:1px solid #2a2a2a;background:#f0f0f0;"></div>
<div class="r" style="left:7px;top:27px;width:407px;height:539px;border:1px solid #dcdcdc;border-bottom:none;border-right:none;background:#f0f0f0;"></div>
<div class="r" style="left:15px;top:36px;width:129px;height:19px;border:1px solid #8c8c8c;border-bottom:none;background:linear-gradient(#f3f3f3 0%,#ebebeb 45%,#dcdcdc 50%,#d4d4d4 100%);"></div>
<div class="r" style="left:144px;top:36px;width:135px;height:19px;border:1px solid #8c8c8c;border-bottom:none;background:linear-gradient(#f3f3f3 0%,#ebebeb 45%,#dcdcdc 50%,#d4d4d4 100%);"></div>
<div class="r" style="left:279px;top:36px;width:126px;height:19px;border:1px solid #8c8c8c;border-bottom:none;background:linear-gradient(#f3f3f3 0%,#ebebeb 45%,#dcdcdc 50%,#d4d4d4 100%);"></div>
<div class="r" style="left:15px;top:54px;width:86px;height:19px;border:1px solid #8c8c8c;border-bottom:none;background:linear-gradient(#f3f3f3 0%,#ebebeb 45%,#dcdcdc 50%,#d4d4d4 100%);"></div>
<div class="r" style="left:213px;top:54px;width:112px;height:19px;border:1px solid #8c8c8c;border-bottom:none;background:linear-gradient(#f3f3f3 0%,#ebebeb 45%,#dcdcdc 50%,#d4d4d4 100%);"></div>
<div class="r" style="left:324px;top:54px;width:81px;height:19px;border:1px solid #8c8c8c;border-bottom:none;background:linear-gradient(#f3f3f3 0%,#ebebeb 45%,#dcdcdc 50%,#d4d4d4 100%);"></div>
<div class="r" style="left:13px;top:72px;width:393px;height:457px;border:1px solid #8c8c8c;background:#fff;"></div>
<div class="r" style="left:100px;top:52px;width:114px;height:21px;border:1px solid #8c8c8c;border-bottom:none;background:#fff;"></div>
<span class="t" style="left: 58.6px; top: 41.19px; font-size: 11px; color: rgb(0, 0, 0); letter-spacing: -0.28px;">Připojení</span>
<span class="t" style="left: 187.8px; top: 41.19px; font-size: 11px; color: rgb(0, 0, 0); letter-spacing: -0.261px;">Programy</span>
<span class="t" style="left: 321.5px; top: 41.19px; font-size: 11px; color: rgb(0, 0, 0); letter-spacing: -0.121px;">Upřesnit</span>
<span class="t" style="left: 39.8px; top: 59.19px; font-size: 11px; color: rgb(0, 0, 0); letter-spacing: -0.389px;">Obecné</span>
<span class="t" style="left: 126.8px; top: 57.39px; font-size: 11px; color: rgb(0, 0, 0); letter-spacing: -0.374px;">Zabezpečení</span>
<span class="t" style="left: 236.9px; top: 59.19px; font-size: 11px; color: rgb(0, 0, 0); letter-spacing: -0.286px;">Osobní údaje</span>
<span class="t" style="left: 349.7px; top: 59.19px; font-size: 11px; color: rgb(0, 0, 0); letter-spacing: -0.444px;">Obsah</span>
<span class="t" style="left: 29.3px; top: 102.09px; font-size: 11px; color: rgb(0, 0, 0); letter-spacing: -0.198px;">Vyberte zónu k zobrazení nebo změně nastavení zabezpečení.</span>
<div class="r" style="left:29px;top:115px;width:363px;height:72px;border:1px solid #808080;background:#fff;"></div>
<div class="r" style="left:373px;top:117px;width:17px;height:68px;background:linear-gradient(90deg,#e8e8e8,#f2f2f2 50%,#e6e6e6);"></div>
<svg class="r" style="left:377px;top:123px" width="8" height="5" viewBox="0 0 8 5"><path d="M0 4.5 L4 0 L8 4.5 Z" fill="#444"></path></svg>
<svg class="r" style="left:377px;top:174px" width="8" height="5" viewBox="0 0 8 5"><path d="M0 0 H8 L4 4.5 Z" fill="#444"></path></svg>
<div class="r" style="left:374px;top:135px;width:15px;height:27px;border:1px solid #a0a0a0;border-radius:2px;background:linear-gradient(90deg,#f4f4f4,#e0e0e2 60%,#cfcfd3);"></div>
<div class="r" style="left:378px;top:144px;width:7px;height:1px;background:#6a6a6a;"></div>
<div class="r" style="left:378px;top:146px;width:7px;height:1px;background:#6a6a6a;"></div>
<div class="r" style="left:378px;top:148px;width:7px;height:1px;background:#6a6a6a;"></div>
<div class="r" style="left:378px;top:150px;width:7px;height:1px;background:#6a6a6a;"></div>
<svg class="r" style="left:52px;top:119px" width="31" height="31" viewBox="0 0 31 31"><defs><radialGradient id="g1" cx="38%" cy="32%" r="70%"><stop offset="0" stop-color="#a8e8ff"></stop><stop offset=".35" stop-color="#3aa0e0"></stop><stop offset=".75" stop-color="#1560b8"></stop><stop offset="1" stop-color="#0a3478"></stop></radialGradient><radialGradient id="l1" cx="40%" cy="30%" r="80%"><stop offset="0" stop-color="#9ae86a"></stop><stop offset="1" stop-color="#2a9a3a"></stop></radialGradient></defs><ellipse cx="16" cy="29.5" rx="11" ry="1.5" fill="#000" opacity=".12"></ellipse><circle cx="15" cy="15" r="14.5" fill="url(#g1)"></circle><path d="M2 11 Q5 5 11 4 Q9 8 12 10 Q13 14 9 16 Q8 20 5 21 Q1 17 2 11 Z" fill="url(#l1)" opacity=".9"></path><path d="M11 21 Q16 18 21 21 Q23 25 19 28 Q14 29 11 26 Z" fill="url(#l1)" opacity=".9"></path><path d="M22 4 Q28 8 29 15 Q26 17 24 13 Q21 9 22 4 Z" fill="url(#l1)" opacity=".9"></path><ellipse cx="11" cy="8" rx="6" ry="3.5" fill="#fff" opacity=".25"></ellipse></svg>
<span class="t" style="left: 48px; top: 156.39px; font-size: 11px; color: rgb(0, 0, 0); letter-spacing: 0.286px;">Internet</span>
<svg class="r" style="left:125px;top:118px" width="34" height="32" viewBox="0 0 34 32"><defs><radialGradient id="ig1" cx="40%" cy="35%" r="70%"><stop offset="0" stop-color="#8ad8f8"></stop><stop offset=".45" stop-color="#2a8ad8"></stop><stop offset="1" stop-color="#103a90"></stop></radialGradient><linearGradient id="is1" x1="0" y1="0" x2="1" y2="0"><stop offset="0" stop-color="#1a3ac8"></stop><stop offset=".45" stop-color="#2a5ae0"></stop><stop offset=".5" stop-color="#6a9af0"></stop><stop offset="1" stop-color="#8ab8f8"></stop></linearGradient></defs><circle cx="12.5" cy="12" r="11.5" fill="url(#ig1)"></circle><path d="M2 9 Q4 4 8 3 Q7 7 9 9 Q6 11 3 11Z" fill="#3aa86a" opacity=".7"></path><path d="M7 18 Q11 16 13 20 Q11 23 8 22Z" fill="#3aa86a" opacity=".6"></path><rect x="14" y="10" width="19" height="15" rx="1" fill="#a8c8f4" stroke="#6a94d8" stroke-width=".8"></rect><rect x="15.5" y="11.5" width="16" height="12" fill="url(#is1)"></rect><path d="M21 25 L19 28 H29 L27 25Z" fill="#98b8e4"></path><ellipse cx="24" cy="29" rx="6.5" ry="2" fill="#a8c4e8"></ellipse></svg>
<div class="r" style="left:107px;top:154px;width:72px;height:15px;background:#3a8fe6;"></div>
<span class="t" style="left: 109px; top: 156.59px; font-size: 11px; color: rgb(255, 255, 255); letter-spacing: -0.114px;">Místní intranet</span>
<svg class="r" style="left:203px;top:119px" width="31" height="32" viewBox="0 0 31 32"><defs><linearGradient id="ck" x1="0" y1="0" x2="0" y2="1"><stop offset="0" stop-color="#7ad86a"></stop><stop offset="1" stop-color="#2a9a2a"></stop></linearGradient></defs><path d="M4 18 L11.5 27 L27 4" fill="none" stroke="#3a9a3a" stroke-width="5.6" stroke-linecap="round" stroke-linejoin="round"></path><path d="M4 18 L11.5 27 L27 4" fill="none" stroke="url(#ck)" stroke-width="4.2" stroke-linecap="round" stroke-linejoin="round"></path></svg>
<span class="t" style="left: 184.5px; top: 155.99px; font-size: 11px; color: rgb(0, 0, 0); letter-spacing: -0.085px;">Důvěryhodné</span>
<span class="t" style="left: 203.8px; top: 169.09px; font-size: 11px; color: rgb(0, 0, 0); letter-spacing: -0.097px;">weby</span>
<svg class="r" style="left:277px;top:119px" width="32" height="32" viewBox="0 0 32 32"><defs><radialGradient id="rs" cx="40%" cy="30%" r="75%"><stop offset="0" stop-color="#f05050"></stop><stop offset="1" stop-color="#b01010"></stop></radialGradient></defs><circle cx="16" cy="16" r="12.8" fill="none" stroke="#a01818" stroke-width="6"></circle><circle cx="16" cy="16" r="12.8" fill="none" stroke="url(#rs)" stroke-width="4.6"></circle><path d="M8 8 L24 24" stroke="#a01818" stroke-width="4.8"></path><path d="M8 8 L24 24" stroke="#d02828" stroke-width="3.4"></path><path d="M6 10 Q10 3 18 3.5" stroke="#f8a0a0" stroke-width="1" fill="none" opacity=".7"></path></svg>
<span class="t" style="left: 268px; top: 156.39px; font-size: 11px; color: rgb(0, 0, 0); letter-spacing: -0.008px;">Servery s</span>
<span class="t" style="left: 267.9px; top: 169.09px; font-size: 11px; color: rgb(0, 0, 0); letter-spacing: -0.392px;">omezen…</span>
<svg class="r" style="left:30px;top:200px" width="34" height="32" viewBox="0 0 34 32"><defs><radialGradient id="ig2" cx="40%" cy="35%" r="70%"><stop offset="0" stop-color="#8ad8f8"></stop><stop offset=".45" stop-color="#2a8ad8"></stop><stop offset="1" stop-color="#103a90"></stop></radialGradient><linearGradient id="is2" x1="0" y1="0" x2="1" y2="0"><stop offset="0" stop-color="#1a3ac8"></stop><stop offset=".45" stop-color="#2a5ae0"></stop><stop offset=".5" stop-color="#6a9af0"></stop><stop offset="1" stop-color="#8ab8f8"></stop></linearGradient></defs><circle cx="12.5" cy="12" r="11.5" fill="url(#ig2)"></circle><path d="M2 9 Q4 4 8 3 Q7 7 9 9 Q6 11 3 11Z" fill="#3aa86a" opacity=".7"></path><path d="M7 18 Q11 16 13 20 Q11 23 8 22Z" fill="#3aa86a" opacity=".6"></path><rect x="14" y="10" width="19" height="15" rx="1" fill="#a8c8f4" stroke="#6a94d8" stroke-width=".8"></rect><rect x="15.5" y="11.5" width="16" height="12" fill="url(#is2)"></rect><path d="M21 25 L19 28 H29 L27 25Z" fill="#98b8e4"></path><ellipse cx="24" cy="29" rx="6.5" ry="2" fill="#a8c4e8"></ellipse></svg>
<span class="t" style="left: 74.7px; top: 190.09px; font-size: 11px; color: rgb(0, 0, 0); font-weight: bold; letter-spacing: 0.475px;">Místní intranet</span>
<span class="t" style="left: 74.5px; top: 208.09px; font-size: 11px; color: rgb(0, 0, 0); letter-spacing: -0.091px;">Tato zóna je určena pro všechny weby,</span>
<span class="t" style="left: 74.5px; top: 221.09px; font-size: 11px; color: rgb(0, 0, 0); letter-spacing: -0.104px;">které se nacházejí na vašem intranetu.</span>
<div class="r" style="left:279.3px;top:186.6px;width:116.4px;height:35.4px;border:5.6px solid #ea0008;"></div>
<div class="r" style="left:288px;top:194px;width:97px;height:21px;border:1px solid #707070;border-radius:3px;background:linear-gradient(#f2f2f2 0%,#ebebeb 45%,#dddddd 50%,#cfcfcf 100%);box-shadow:inset 0 0 0 1px #fcfcfc;"></div>
<span class="t" style="left: 322px; top: 199.99px; font-size: 11px; color: rgb(0, 0, 0); letter-spacing: -0.155px;">Weby</span>
<div class="r" style="left:26px;top:275px;width:368px;height:199px;border:1px solid #d5dfe5;border-radius:3px;"></div>
<div class="r" style="left:31px;top:270px;width:150px;height:12px;background:#fff;"></div>
<span class="t" style="left: 33.7px; top: 271.09px; font-size: 11px; color: rgb(0, 0, 0); letter-spacing: -0.118px;">Úroveň zabezpečení této zóny</span>
<span class="t" style="left: 51.2px; top: 289.09px; font-size: 11px; color: rgb(0, 0, 0); letter-spacing: -0.056px;">Povolené úrovně pro tuto zónu: Všechny</span>
<div class="r" style="left:63px;top:310px;width:3px;height:82px;border:1px solid #b0b0b0;border-right-color:#e8e8e8;border-bottom-color:#e8e8e8;background:#e6e6e6;"></div>
<div class="r" style="left:49px;top:315px;width:4px;height:1px;background:#c4c4c4;"></div>
<div class="r" style="left:77px;top:315px;width:4px;height:1px;background:#c4c4c4;"></div>
<div class="r" style="left:49px;top:333px;width:4px;height:1px;background:#c4c4c4;"></div>
<div class="r" style="left:77px;top:333px;width:4px;height:1px;background:#c4c4c4;"></div>
<div class="r" style="left:49px;top:351px;width:4px;height:1px;background:#c4c4c4;"></div>
<div class="r" style="left:77px;top:351px;width:4px;height:1px;background:#c4c4c4;"></div>
<div class="r" style="left:49px;top:369px;width:4px;height:1px;background:#c4c4c4;"></div>
<div class="r" style="left:77px;top:369px;width:4px;height:1px;background:#c4c4c4;"></div>
<div class="r" style="left:49px;top:387px;width:4px;height:1px;background:#c4c4c4;"></div>
<div class="r" style="left:77px;top:387px;width:4px;height:1px;background:#c4c4c4;"></div>
<div class="r" style="left:54px;top:364px;width:21px;height:10px;border:1px solid #707070;border-radius:2px;background:linear-gradient(#f4f4f4,#dedede 50%,#d0d0d0);"></div>
<span class="t" style="left: 97.4px; top: 308.09px; font-size: 11px; color: rgb(0, 0, 0); font-weight: bold; letter-spacing: 0.498px;">Středně nízké</span>
<span class="t" style="left: 97.4px; top: 323.09px; font-size: 11px; color: rgb(0, 0, 0); letter-spacing: -0.073px;">- Vhodné pro weby v místní síti (intranet).</span>
<span class="t" style="left: 97.4px; top: 336.09px; font-size: 11px; color: rgb(0, 0, 0); letter-spacing: -0.091px;">- Většina obsahu se bude spouštět bez zobrazování výzev.</span>
<span class="t" style="left: 97.4px; top: 349.09px; font-size: 11px; color: rgb(0, 0, 0); letter-spacing: -0.083px;">- Nepodepsané ovládací prvky ActiveX nebudou staženy.</span>
<span class="t" style="left: 97.4px; top: 362.09px; font-size: 11px; color: rgb(0, 0, 0); letter-spacing: -0.014px;">- Stejné jako Střední úroveň bez výzev.</span>
<div class="r" style="left:56px;top:411px;width:13px;height:13px;border:1px solid #8f8f8f;background:linear-gradient(135deg,#dcdcdc,#f6f6f6);box-shadow:inset 0 0 0 2px #f0f0f0;"></div>
<div class="r" style="left:58px;top:413px;width:9px;height:9px;border:1px solid #b8b8b8;background:linear-gradient(135deg,#cfcfcf,#f4f4f4);"></div>
<span class="t" style="left: 71.8px; top: 412.09px; font-size: 11px; color: rgb(0, 0, 0); letter-spacing: -0.026px;">Povolit chráněný režim (vyžaduje restartování aplikace Internet</span>
<span class="t" style="left: 71.3px; top: 425.39px; font-size: 11px; color: rgb(0, 0, 0); letter-spacing: -0.069px;">Explorer)</span>
<div class="r" style="left:150px;top:446px;width:111px;height:21px;border:1px solid #707070;border-radius:3px;background:linear-gradient(#f2f2f2 0%,#ebebeb 45%,#dddddd 50%,#cfcfcf 100%);box-shadow:inset 0 0 0 1px #fcfcfc;"></div>
<span class="t" style="left: 166px; top: 452.09px; font-size: 11px; color: rgb(0, 0, 0); letter-spacing: -0.029px;">Vlastní úroveň...</span>
<div class="r" style="left:270px;top:446px;width:111px;height:21px;border:1px solid #adb2b5;border-radius:3px;background:#f4f4f4;"></div>
<span class="t" style="left: 288px; top: 452.09px; font-size: 11px; color: rgb(131, 131, 131); letter-spacing: -0.059px;">Výchozí úroveň</span>
<div class="r" style="left:176px;top:478px;width:210px;height:22px;border:1px solid #adb2b5;border-radius:3px;background:#f4f4f4;"></div>
<span class="t" style="left: 197.5px; top: 484.09px; font-size: 11px; color: rgb(131, 131, 131); letter-spacing: -0.079px;">Obnovit výchozí úroveň všech zón</span>
<div class="r" style="left:172px;top:537px;width:74px;height:22px;border:1px solid #3c7fb1;border-radius:3px;background:linear-gradient(#eaf6fd 0%,#d9f0fc 45%,#bee6fd 50%,#a7d9f5 100%);box-shadow:inset 0 0 0 1px #48b4e8;"></div>
<div class="r" style="left:174px;top:539px;width:70px;height:18px;border-radius:2px;background:linear-gradient(#f2f2f2 0%,#ebebeb 45%,#dddddd 50%,#cfcfcf 100%);"></div>
<span class="t" style="left: 200.7px; top: 543.09px; font-size: 11px; color: rgb(0, 0, 0); letter-spacing: -0.853px;">OK</span>
<div class="r" style="left:253px;top:537px;width:73px;height:22px;border:1px solid #707070;border-radius:3px;background:linear-gradient(#f2f2f2 0%,#ebebeb 45%,#dddddd 50%,#cfcfcf 100%);box-shadow:inset 0 0 0 1px #fcfcfc;"></div>
<span class="t" style="left: 272.5px; top: 543.39px; font-size: 11px; color: rgb(0, 0, 0); letter-spacing: -0.237px;">Storno</span>
<div class="r" style="left:334px;top:537px;width:73px;height:22px;border:1px solid #adb2b5;border-radius:3px;background:#f4f4f4;"></div>
<span class="t" style="left: 354px; top: 543.39px; font-size: 11px; color: rgb(131, 131, 131); letter-spacing: -0.198px;">Použít</span>
<span class="t" style="left: 960px; top: 657.62px; font-size: 34px; color: rgb(60, 16, 204); font-weight: bold; font-style: italic; -webkit-text-stroke: 1.6px rgb(60, 16, 204); font-family: &quot;Liberation Serif&quot;, serif; letter-spacing: 1px; transform: scaleX(0.9096); transform-origin: 0px 0px;">foto.ijacek<span style="font-size:30px;letter-spacing:2px">007</span>.cz :-)</span>
</body></html>
